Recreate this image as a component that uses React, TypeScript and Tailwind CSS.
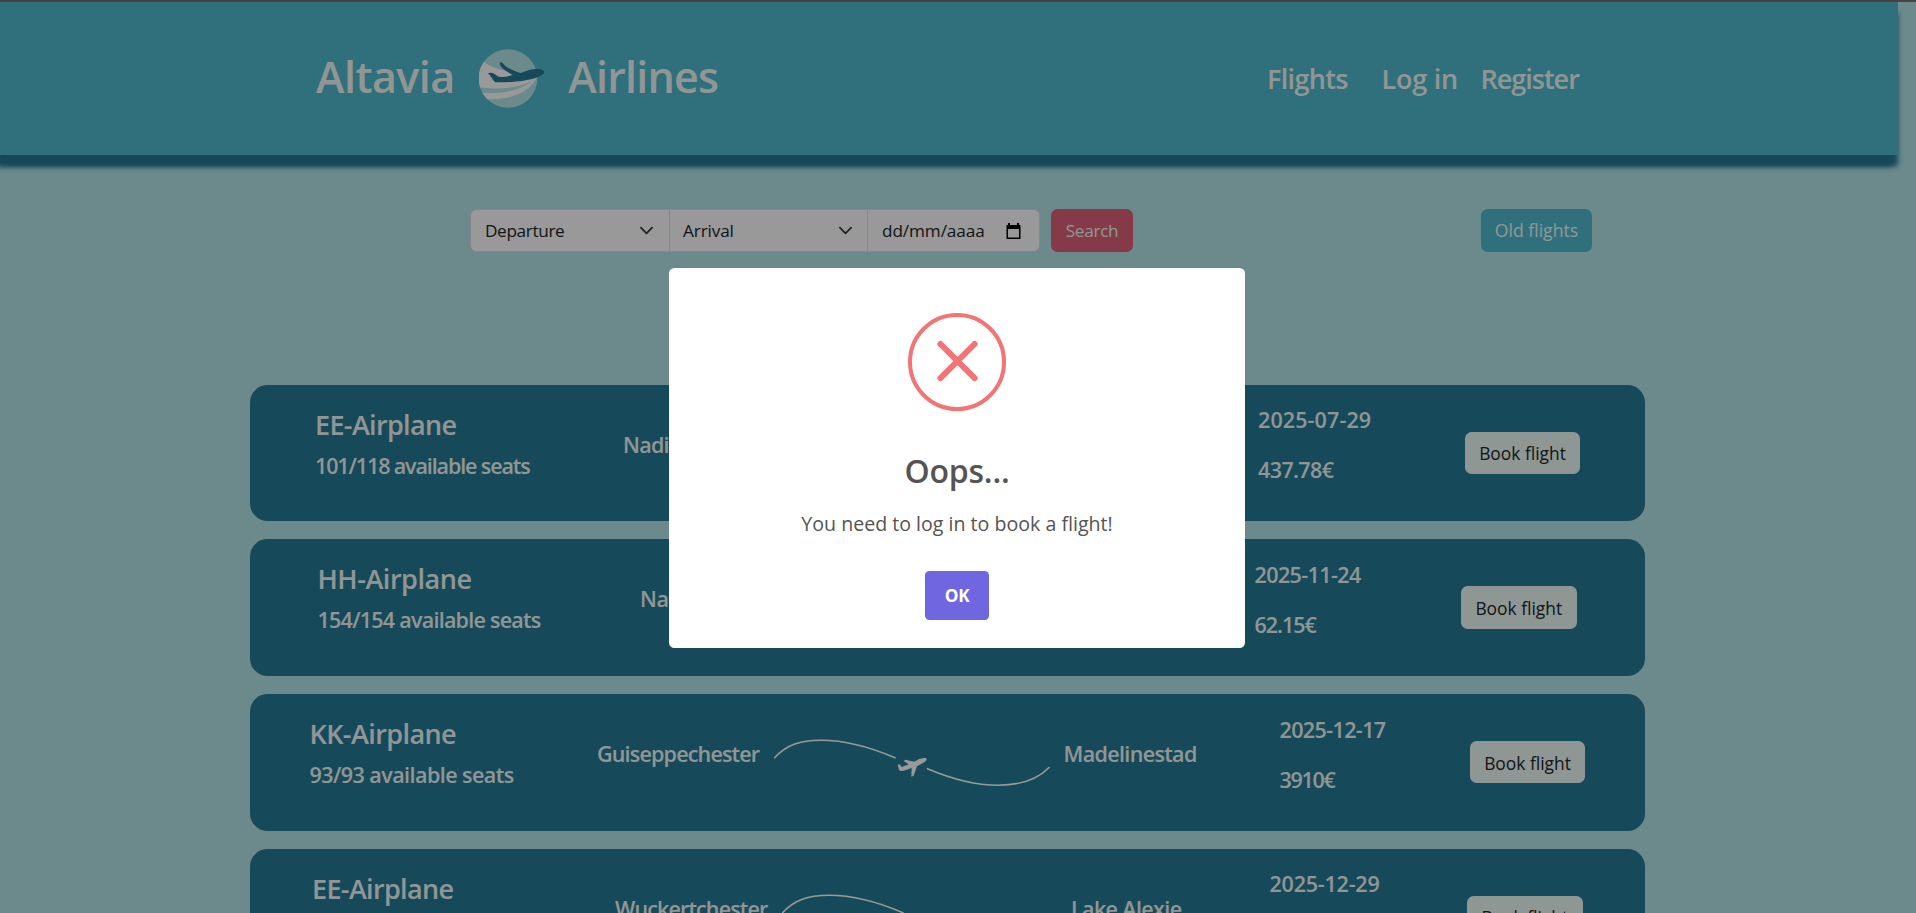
interface Flight {
  plane: string;
  planeClass: string;
  seats: string;
  seatsClass: string;
  from: string;
  fromClass: string;
  to: string;
  toClass: string;
  date: string;
  dateClass: string;
  price: string;
  priceClass: string;
  columns: string;
}

const flights: Flight[] = [
  {
    plane: "EE-Airplane",
    planeClass: "tracking-[-0.65px]",
    seats: "101/118 available seats",
    seatsClass: "tracking-[-1.12px]",
    from: "Nadiachester",
    fromClass: "tracking-[-0.7px]",
    to: "Madelinestad",
    toClass: "tracking-[-0.6px]",
    date: "2025-07-29",
    dateClass: "tracking-[0.1px]",
    price: "437.78€",
    priceClass: "tracking-[-0.6px]",
    columns: "pl-[65px] grid-cols-[308px_160px_300px_175px_207px_115px]",
  },
  {
    plane: "HH-Airplane",
    planeClass: "tracking-[-0.45px]",
    seats: "154/154 available seats",
    seatsClass: "tracking-[-0.75px]",
    from: "Naderstad",
    fromClass: "tracking-[-0.3px]",
    to: "Lake Alexie",
    toClass: "tracking-[-0.6px]",
    date: "2025-11-24",
    dateClass: "tracking-[-0.6px]",
    price: "62.15€",
    priceClass: "tracking-[-1px]",
    columns: "pl-[67.5px] grid-cols-[322.5px_160px_300px_154.5px_206.5px_115.5px]",
  },
  {
    plane: "KK-Airplane",
    planeClass: "tracking-[-0.58px]",
    seats: "93/93 available seats",
    seatsClass: "tracking-[-0.55px]",
    from: "Guiseppechester",
    fromClass: "tracking-[-0.82px]",
    to: "Madelinestad",
    toClass: "tracking-[-0.65px]",
    date: "2025-12-17",
    dateClass: "tracking-[-0.62px]",
    price: "3910€",
    priceClass: "tracking-[-1.3px]",
    columns: "pl-[59.5px] grid-cols-[287.5px_176.5px_290px_216px_190.5px_115px]",
  },
  {
    plane: "EE-Airplane",
    planeClass: "tracking-[-0.65px]",
    seats: "118/118 available seats",
    seatsClass: "tracking-[-1.12px]",
    from: "Wuckertchester",
    fromClass: "tracking-[-0.87px]",
    to: "Lake Alexie",
    toClass: "tracking-[-0.62px]",
    date: "2025-12-29",
    dateClass: "tracking-[-0.22px]",
    price: "1250€",
    priceClass: "tracking-[-0.6px]",
    columns: "pl-[62px] grid-cols-[303px_167px_289px_198.5px_197.5px_115.5px]",
  },
];

function Logo() {
  return (
    <svg className="h-[59px] w-[65.3px] shrink-0" viewBox="537 57 196 177">
      <defs>
        <clipPath id="globe">
          <circle cx="624" cy="145.5" r="88" />
        </clipPath>
      </defs>
      <circle cx="624" cy="145.5" r="88" fill="#b4e4e9" />
      <g clipPath="url(#globe)" fill="#fff">
        <path d="M530 80 L552 95 C572 111 600 121 634 122 L712 140 C690 168 610 182 530 172 Z" />
        <path d="M530 187 C610 196 670 180 712 141 C690 184 635 212 560 207 L530 200 Z" />
      </g>
      <path
        fill="#267b94"
        d="M564 130 C570 127 576 128 580 130 L596 140 C608 142 622 140 637 135 C624 126 610 120 602 108 C599 102 598 97 602 97 C607 97 610 101 615 107 C628 118 645 124 662 129 C680 121 700 116 716 117 C728 118 734 123 733 128 C732 133 722 139 706 144 C680 153 630 158 585 157 C577 148 572 137 564 130 Z"
      />
    </svg>
  );
}

function Route() {
  return (
    <svg className="mt-[45px] h-[48px] w-[276px]" viewBox="0 0 276 48" fill="none">
      <g stroke="#fff" strokeWidth="1.6" strokeLinecap="round">
        <path d="M0.6 18.7 C12 6 26 1.2 47 1.2 C70 1.2 94 7 121 18.8" />
        <path d="M153.5 29.7 C180 41 203 46.2 224 46.2 C246 46.2 264 40 275 28.5" />
      </g>
      <path
        transform="translate(124 19) scale(0.3333) translate(-115 -84)"
        fill="#fff"
        d="M201 86 C202 90 198 95 190 99 L172 109 L162 137 L155 140 L156 114 C148 116 140 121 128 123 C121 123 118 120 117 116 L114 104 L119 103 L127 111 L147 103 L132 93 L137 89 L164 95 L177 88 C186 84 199 82 201 86 Z"
      />
    </svg>
  );
}

function Chevron() {
  return (
    <svg className="h-[15px] w-[15px]" viewBox="0 0 16 16" fill="none">
      <path d="m2 5 6 6 6-6" stroke="#343a40" strokeWidth="1.9" strokeLinecap="round" strokeLinejoin="round" />
    </svg>
  );
}

function CalendarIcon() {
  return (
    <svg className="h-4 w-[15px]" viewBox="0 0 15 16">
      <path fill="#000" d="M2 0h2v2h7V0h2v2h1.5v14H.5V2H2zM2 6v8.5h11V6z" fillRule="evenodd" />
    </svg>
  );
}

function FlightCard({ flight }: { flight: Flight }) {
  return (
    <article
      className={`grid h-[136.7px] items-start rounded-[17.6px] bg-[#267b94] text-[21.5px] leading-[26px] font-[640] whitespace-nowrap text-[#f2fbf8] ${flight.columns}`}
    >
      <div className="pt-[23px]">
        <h2 className={`text-[27px] leading-[33px] ${flight.planeClass}`}>{flight.plane}</h2>
        <p className={`mt-3 ${flight.seatsClass}`}>{flight.seats}</p>
      </div>
      <p className={`pt-[47px] ${flight.fromClass}`}>{flight.from}</p>
      <Route />
      <p className={`pt-[47px] ${flight.toClass}`}>{flight.to}</p>
      <div className="pt-[22.5px]">
        <p className={flight.dateClass}>{flight.date}</p>
        <p className={`mt-6 ${flight.priceClass}`}>{flight.price}</p>
      </div>
      <button className="mt-[47px] h-[42.3px] rounded-[6.6px] bg-[#effcf8] pt-px text-[17.4px] font-normal text-[#212529]">
        Book flight
      </button>
    </article>
  );
}

function ErrorDialog() {
  return (
    <div className="absolute inset-0 flex items-start justify-center bg-black/40 pr-0.5 pt-[268px]">
      <div className="flex h-[380px] w-[576px] flex-col items-center rounded-[5.5px] bg-white pt-[45px]">
        <svg className="h-[98px] w-[98px] shrink-0" viewBox="0 0 98 98" fill="none" stroke="#f27474">
          <circle cx="49" cy="49" r="47" strokeWidth="4" />
          <path d="m32.4 31 34.2 34.2M66.6 31 32.4 65.2" strokeWidth="6" strokeLinecap="round" />
        </svg>
        <h2 className="mt-[39.6px] text-[32px] leading-10 font-semibold tracking-[-0.2px] text-[#545454]">Oops...</h2>
        <p className="mt-[18.8px] text-[19.6px] leading-[30px] text-[#545454]">You need to log in to book a flight!</p>
        <button className="mt-[31.6px] h-[49px] w-16 rounded-[4.4px] bg-[#7066e0] text-[17.2px] font-bold tracking-[-0.3px] text-white">
          OK
        </button>
      </div>
    </div>
  );
}

export default function App() {
  return (
    <div className="relative h-[913px] w-[1916px] overflow-hidden bg-[#b4e4e9] font-['Open_Sans','Noto_Sans',sans-serif]">
      <div className="h-0.5 bg-[#7a7270]" />
      <header className="flex h-[153px] w-[1898px] items-center bg-[#50bbcf] pl-[316px] font-[640] whitespace-nowrap text-[#f2fbf8] shadow-[0_11px_5px_#267b94,-6px_11px_5px_#267b94]">
        <div className="flex w-[952px] items-center text-[43px]">
          <span className="w-[163px] -translate-y-px tracking-[-0.5px]">Altavia</span>
          <Logo />
          <span className="ml-6 -translate-y-px tracking-[-0.75px]">Airlines</span>
        </div>
        <nav className="flex translate-y-px text-[27px]">
          <a className="-ml-px w-[114.5px] tracking-[-0.65px]">Flights</a>
          <a className="w-[99px] tracking-[-0.25px]">Log in</a>
          <a className="tracking-[-1px]">Register</a>
        </nav>
      </header>

      <main className="w-[1898px]">
        <form className="mt-[54px] flex h-[43px] items-center pl-[470px] text-[17.2px] text-[#212529]">
          <div className="flex h-[42.5px] w-[570px] items-stretch rounded-[6.6px] border border-[#dee2e6] bg-white">
            <div className="flex w-[198px] items-center justify-between pr-[15px] pl-[14px]">
              <span className="tracking-[-0.35px]">Departure</span>
              <Chevron />
            </div>
            <div className="flex w-[198px] items-center justify-between border-l border-[#dee2e6] pr-[14px] pl-[13px]">
              <span className="tracking-[-0.13px]">Arrival</span>
              <Chevron />
            </div>
            <div className="flex flex-1 items-center justify-between border-l border-[#dee2e6] pr-[18px] pl-[14px]">
              <span className="tracking-[-0.1px]">dd/mm/aaaa</span>
              <CalendarIcon />
            </div>
          </div>
          <button className="ml-[11px] h-[43px] w-[82px] rounded-[6.6px] bg-[#dc6177] tracking-[-0.3px] text-[#f2fbf8]">
            Search
          </button>
          <button className="ml-[348px] h-[43px] w-[111px] rounded-[6.6px] bg-[#50bbcf] text-[17.6px] text-[#f2fbf8]">
            Old flights
          </button>
        </form>

        <section className="mt-[132.7px] ml-[250px] flex w-[1395px] flex-col gap-[18px]">
          {flights.map((flight) => (
            <FlightCard key={flight.date} flight={flight} />
          ))}
        </section>
      </main>

      <ErrorDialog />
    </div>
  );
}
